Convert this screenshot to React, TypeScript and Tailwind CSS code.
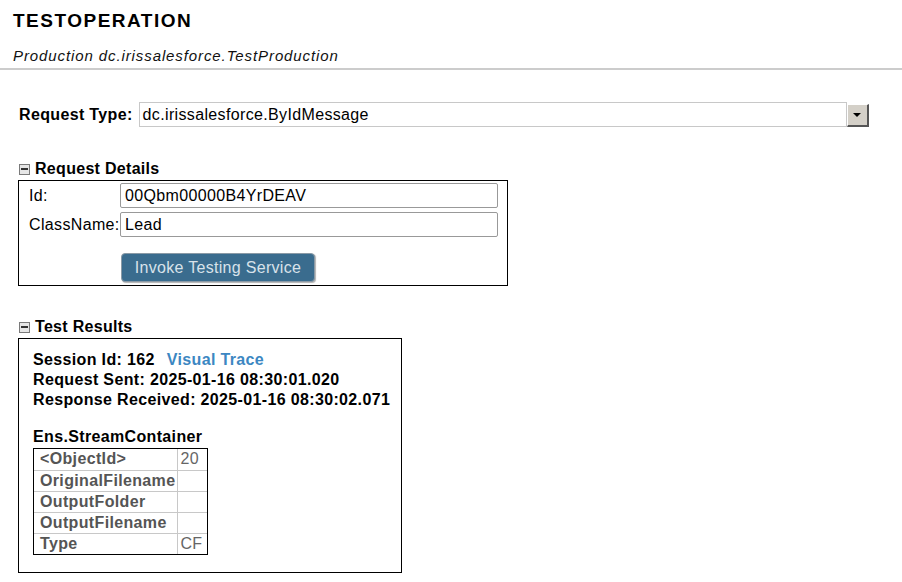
const fields = [
  { label: "Id:", value: "00Qbm00000B4YrDEAV" },
  { label: "ClassName:", value: "Lead" },
];

const rows = [
  { name: "<ObjectId>", value: "20" },
  { name: "OriginalFilename", value: "" },
  { name: "OutputFolder", value: "" },
  { name: "OutputFilename", value: "" },
  { name: "Type", value: "CF" },
];

function CollapseIcon() {
  return (
    <span className="inline-flex w-[11px] h-[11px] border border-[#7a7a7a] bg-[#e6e6e6] items-center justify-center mr-[5px]">
      <span className="block w-[7px] h-[2px] bg-[#333]" />
    </span>
  );
}

function SectionTitle({ text }: { text: string }) {
  return (
    <div className="flex items-center pl-[19px] h-[18px] text-[16px] font-bold text-black tracking-[0.3px]">
      <CollapseIcon />
      {text}
    </div>
  );
}

export default function App() {
  return (
    <div className="w-[902px] h-[582px] bg-white overflow-hidden font-['Liberation_Sans',Arial,sans-serif] text-black tracking-[0.35px]">
      {/* header */}
      <div className="px-[13px] pt-[10px] pb-[3px] border-b-2 border-[#cccccc]">
        <h1 className="text-[19px] leading-[22px] font-bold tracking-[1.5px]">TESTOPERATION</h1>
        <div className="mt-[15px] text-[15px] leading-[18px] italic tracking-[0.9px] text-[#111]">
          Production dc.irissalesforce.TestProduction
        </div>
      </div>

      {/* request type */}
      <div className="flex items-center pl-[19px] mt-[32px]">
        <span className="text-[16px] font-bold mr-[6px]">Request Type:</span>
        <div className="flex items-end">
          <div className="w-[708px] h-[25px] border border-[#c8c8c8] flex items-center pl-[3px] text-[16px]">
            dc.irissalesforce.ByIdMessage
          </div>
          <div className="w-[22px] h-[23px] bg-[#d4d0c8] border-t border-l border-t-white border-l-white border-r-2 border-b-2 border-r-[#555] border-b-[#555] flex items-center justify-center">
            <span className="block w-0 h-0 border-l-[4px] border-r-[4px] border-t-[4px] border-l-transparent border-r-transparent border-t-black" />
          </div>
        </div>
      </div>

      {/* request details */}
      <div className="mt-[33px]">
        <SectionTitle text="Request Details" />
        <div className="ml-[18px] mt-[2px] w-[490px] h-[106px] border border-black pt-[2px] pl-[10px] flex flex-col gap-[4px]">
          {fields.map((f) => (
            <div key={f.label} className="flex items-center text-[16px]">
              <span className="w-[91px]">{f.label}</span>
              <div className="w-[378px] h-[25px] border border-[#999] rounded-[2px] flex items-center pl-[4px]">
                {f.value}
              </div>
            </div>
          ))}
          <div className="pl-[92px] mt-[12px]">
            <button className="w-[194px] h-[29px] bg-[#3a6c8e] text-[#d8e2ea] text-[16px] rounded-[4px] border border-[#8a9aa6] shadow-[1px_1px_1px_rgba(0,0,0,0.3)] tracking-[0.3px]">
              Invoke Testing Service
            </button>
          </div>
        </div>
      </div>

      {/* test results */}
      <div className="mt-[32px]">
        <SectionTitle text="Test Results" />
        <div className="ml-[18px] mt-[2px] w-[384px] h-[235px] border border-black pt-[11px] pl-[14px] text-[16px] font-bold">
          <div className="leading-[20px]">
            Session Id: 162<span className="ml-[12px] text-[#3c87c2]">Visual Trace</span>
          </div>
          <div className="leading-[20px]">Request Sent: 2025-01-16 08:30:01.020</div>
          <div className="leading-[20px]">Response Received: 2025-01-16 08:30:02.071</div>
          <div className="mt-[17px] leading-[20px]">Ens.StreamContainer</div>
          <div className="inline-block mt-[1px] border border-black">
            <table className="border-collapse text-[16px]">
              <tbody>
                {rows.map((r, i) => {
                  const last = i === rows.length - 1;
                  return (
                    <tr key={r.name} className="h-[21px]">
                      <td className={last ? "border-r border-[#c8c8c8] pl-[6px] pr-[2px] leading-[18px] font-bold text-[#555]" : "border-r border-b border-[#c8c8c8] pl-[6px] pr-[2px] leading-[18px] font-bold text-[#555]"}>
                        {r.name}
                      </td>
                      <td className={last ? "w-[29px] px-[2px] leading-[18px] font-normal text-[#666]" : "border-b border-[#c8c8c8] w-[29px] px-[2px] leading-[18px] font-normal text-[#666]"}>
                        {r.value}
                      </td>
                    </tr>
                  );
                })}
              </tbody>
            </table>
          </div>
        </div>
      </div>
    </div>
  );
}
